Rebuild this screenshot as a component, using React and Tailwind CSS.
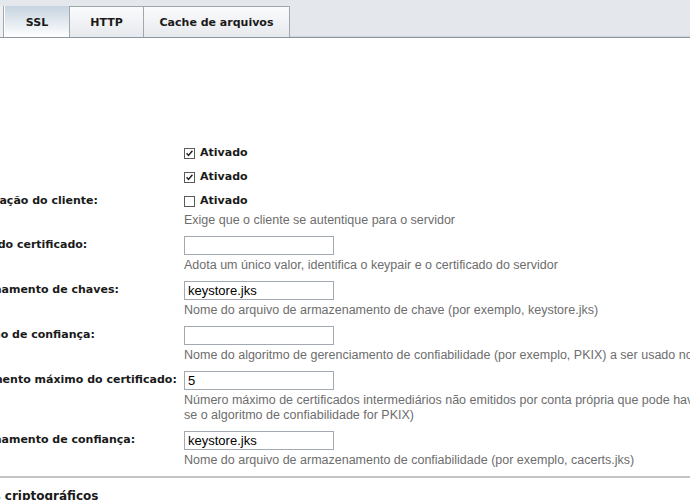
import React from "react";

const bold = { fontFamily: '"DejaVu Sans", Verdana, sans-serif' };
const plain = { fontFamily: '"Liberation Sans", Arial, sans-serif' };

function Check({ checked }) {
  return (
    <svg width="11" height="11" viewBox="0 0 11 11" className="shrink-0">
      <rect x="0.5" y="0.5" width="10" height="10" fill="#fff" stroke="#5a5a5a" />
      {checked && <path d="M2.6 5.3 L4.5 7.4 L8.4 2.8" fill="none" stroke="#222" strokeWidth="1.5" />}
    </svg>
  );
}

function Label({ children }) {
  return (
    <div className="h-[19px] flex items-center whitespace-nowrap text-[11px] font-bold text-[#1a1a1a]" style={bold}>
      {children}
    </div>
  );
}

function CheckRow({ label, checked, help }) {
  return (
    <div className="grid grid-cols-[237px_1fr]">
      <div className="h-[24px] flex items-center">
        {label && <Label>{label}</Label>}
      </div>
      <div>
        <div className="h-[24px] flex items-center gap-[5px]">
          <Check checked={checked} />
          <span className="text-[11px] font-bold text-[#1a1a1a]" style={bold}>Ativado</span>
        </div>
        {help && (
          <div className="text-[12.5px] leading-[15px] text-[#6d6d6d] whitespace-nowrap mb-[8px]" style={plain}>{help}</div>
        )}
      </div>
    </div>
  );
}

function FieldRow({ label, value, help }) {
  return (
    <div className="grid grid-cols-[237px_1fr] mb-[8px]">
      <Label>{label}</Label>
      <div>
        <div className="w-[150px] h-[19px] border border-[#a3a9b0] bg-white flex items-center px-[3px] text-[13px] text-black" style={plain}>
          {value}
        </div>
        <div className="mt-[3px] text-[12.5px] leading-[15px] text-[#6d6d6d] whitespace-nowrap" style={plain}>{help}</div>
      </div>
    </div>
  );
}

export default function App() {
  return (
    <div className="w-[690px] h-[500px] overflow-hidden bg-white">
      {/* tabs */}
      <div className="h-[38px] bg-[#e4e7eb] flex items-end border-b border-[#8d969e] shadow-[inset_0_-1px_0_#cfd5db]">
        <div className="w-[4px] h-[31px] bg-[#eef0f3] border-r border-[#9fa7af]" />
        <div className="w-[66px] h-[31px] pt-[3px] flex items-center justify-center text-[11px] font-bold text-[#1a1a1a] bg-gradient-to-b from-[#c6d3df] to-white border-l border-white border-r border-r-[#9fa7af]" style={bold}>
          SSL
        </div>
        <div className="w-[74px] h-[31px] pt-[2px] flex items-center justify-center text-[11px] font-bold text-[#1a1a1a] bg-gradient-to-b from-[#fbfbfc] to-[#e6e9ed] border-t border-r border-[#9fa7af]" style={bold}>
          HTTP
        </div>
        <div className="w-[146px] h-[31px] pt-[2px] flex items-center justify-center text-[11px] font-bold text-[#1a1a1a] bg-gradient-to-b from-[#fbfbfc] to-[#e6e9ed] border-t border-r border-[#9fa7af]" style={bold}>
          Cache de arquivos
        </div>
      </div>

      {/* form, scrolled to the right */}
      <div className="-ml-[130px] pt-[103px]">
        <div className="pl-[77px]">
          <CheckRow label="SSL3:" checked />
          <CheckRow label="TLS:" checked />
          <CheckRow label="Autenticação do cliente:" help="Exige que o cliente se autentique para o servidor" />
          <FieldRow label="Apelido do certificado:" value="" help="Adota um único valor, identifica o keypair e o certificado do servidor" />
          <FieldRow label="Armazenamento de chaves:" value="keystore.jks" help="Nome do arquivo de armazenamento de chave (por exemplo, keystore.jks)" />
          <FieldRow label="Algoritmo de confiança:" value="" help="Nome do algoritmo de gerenciamento de confiabilidade (por exemplo, PKIX) a ser usado no SSL" />
          <FieldRow
            label="Comprimento máximo do certificado:"
            value="5"
            help={<>Número máximo de certificados intermediários não emitidos por conta própria que pode haver em uma cadeia (somente<br />se o algoritmo de confiabilidade for PKIX)</>}
          />
          <FieldRow label="Armazenamento de confiança:" value="keystore.jks" help="Nome do arquivo de armazenamento de confiabilidade (por exemplo, cacerts.jks)" />
        </div>
        <div className="mt-[3px] h-[2px] bg-[#c4c4c4] w-[900px]" />
        <div className="pt-[9px] text-[12px] font-bold text-[#1a1a1a] whitespace-nowrap" style={bold}>
          Conjuntos de cifras criptográficos
        </div>
      </div>
    </div>
  );
}
